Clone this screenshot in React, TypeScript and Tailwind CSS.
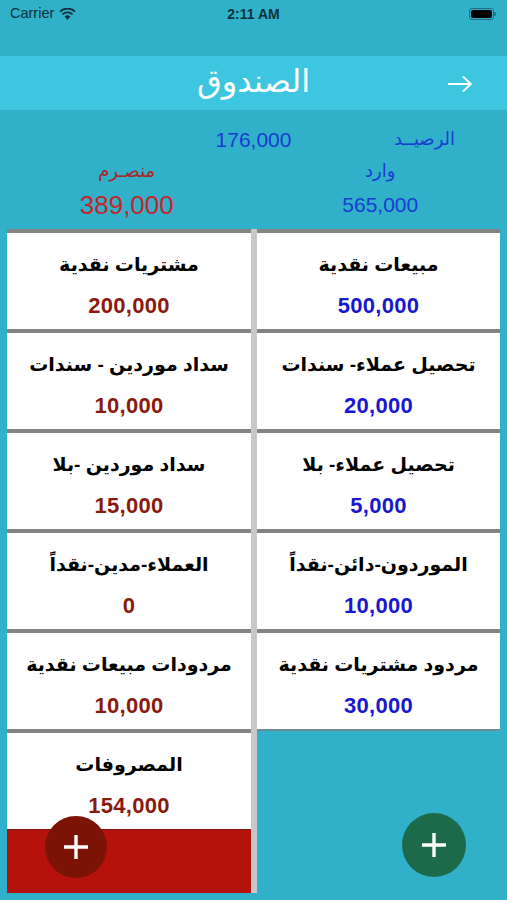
import React from "react";

const LEFT = [
  { title: "مشتريات نقدية", value: "200,000" },
  { title: "سداد موردين - سندات", value: "10,000" },
  { title: "سداد موردين -بلا", value: "15,000" },
  { title: "العملاء-مدين-نقداً", value: "0" },
  { title: "مردودات مبيعات نقدية", value: "10,000" },
  { title: "المصروفات", value: "154,000" },
];

const RIGHT = [
  { title: "مبيعات نقدية", value: "500,000" },
  { title: "تحصيل عملاء- سندات", value: "20,000" },
  { title: "تحصيل عملاء- بلا", value: "5,000" },
  { title: "الموردون-دائن-نقداً", value: "10,000" },
  { title: "مردود مشتريات نقدية", value: "30,000" },
];

function Card({ title, value, tone }: { title: string; value: string; tone: "red" | "blue" }) {
  return (
    <div className="h-[100px] bg-white border-t-[4px] border-[#838383] flex flex-col items-center pt-[19px]">
      <div dir="rtl" className="text-[19px] font-bold text-black leading-[26px]">
        {title}
      </div>
      <div
        className={
          "mt-[15px] text-[22px] font-bold leading-[26px] tracking-[0.3px] " +
          (tone === "red" ? "text-[#8a1a0e]" : "text-[#1818d0]")
        }
      >
        {value}
      </div>
    </div>
  );
}

function Plus() {
  return (
    <svg width="28" height="28" viewBox="0 0 28 28">
      <path d="M14 2v24M2 14h24" stroke="white" strokeWidth="3.4" />
    </svg>
  );
}

export default function App() {
  return (
    <div
      className="relative w-[507px] h-[900px] overflow-hidden bg-[#31b0c9]"
      style={{ fontFamily: '"Liberation Sans", "DejaVu Sans", sans-serif' }}
    >
      {/* status bar */}
      <div className="h-[28px] flex items-center justify-between px-[10px] text-[#10323a]">
        <div className="flex items-center gap-[5px] w-[120px]">
          <span className="text-[14.5px]">Carrier</span>
          <svg width="17" height="12" viewBox="0 0 17 12">
            <path d="M8.5 12 L5.6 8.6 A4.2 4.2 0 0 1 11.4 8.6 Z" fill="#10323a" />
            <path d="M3.4 6.4 A7.5 7.5 0 0 1 13.6 6.4" stroke="#10323a" strokeWidth="1.9" fill="none" />
            <path d="M1 3.6 A11 11 0 0 1 16 3.6" stroke="#10323a" strokeWidth="1.9" fill="none" />
          </svg>
        </div>
        <span className="text-[14px] font-bold">2:11 AM</span>
        <div className="w-[120px] flex justify-end pr-[1px]">
          <div className="flex items-center">
            <div className="w-[25px] h-[12px] rounded-[3px] border border-[#1f6d7d] p-[1px]">
              <div className="w-full h-full rounded-[2px] bg-black" />
            </div>
            <div className="w-[1.5px] h-[4px] bg-[#1f6d7d] rounded-r" />
          </div>
        </div>
      </div>
      <div className="h-[28px]" />

      {/* header */}
      <div className="relative h-[54px] bg-[#3ec6e0] flex items-center justify-center">
        <span dir="rtl" className="text-white text-[32px] leading-none pb-[4px]">
          الصندوق
        </span>
        <svg className="absolute right-[34px] top-[19px]" width="26" height="18" viewBox="0 0 26 18">
          <path d="M1 9h23M16 1.5 23.8 9 16 16.5" stroke="white" strokeWidth="1.8" fill="none" />
        </svg>
      </div>

      {/* summary */}
      <div className="h-[119px] pt-[14px]">
        <div className="grid grid-cols-3 items-center h-[28px]">
          <div />
          <div className="text-center text-[21px] text-[#1a3bd4]">176,000</div>
          <div dir="rtl" className="text-center text-[18px] text-[#1a3bd4] pl-[4px]">
            الرصيــد
          </div>
        </div>
        <div className="grid grid-cols-2 mt-[6px]">
          <div className="flex flex-col items-center">
            <span dir="rtl" className="text-[18px] text-[#a8262a] leading-[26px]">
              منصـرم
            </span>
            <span className="text-[26px] text-[#c4262a] leading-[34px] mt-[4px]">389,000</span>
          </div>
          <div className="flex flex-col items-center">
            <span dir="rtl" className="text-[18px] text-[#1a3bd4] leading-[26px]">
              وارد
            </span>
            <span className="text-[21px] text-[#1a3bd4] leading-[34px] mt-[4px]">565,000</span>
          </div>
        </div>
      </div>

      {/* panel */}
      <div className="mx-[7px] flex items-start">
        <div className="w-[250px] border-r-[6px] border-[#c8c8c8] flex flex-col">
          {LEFT.map((c) => (
            <Card key={c.title} title={c.title} value={c.value} tone="red" />
          ))}
          <div className="h-[64px] bg-[#b5120c] border-t border-[#7a1a14]" />
        </div>
        <div className="flex-1 flex flex-col border-b-[2px] border-[#6f8a90]">
          {RIGHT.map((c) => (
            <Card key={c.title} title={c.title} value={c.value} tone="blue" />
          ))}
        </div>
      </div>

      {/* floating buttons */}
      <button className="absolute left-[45px] top-[816px] w-[62px] h-[62px] rounded-full bg-[#7c1307] flex items-center justify-center">
        <Plus />
      </button>
      <button className="absolute left-[402px] top-[813px] w-[64px] h-[64px] rounded-full bg-[#1d6a4a] flex items-center justify-center">
        <Plus />
      </button>
    </div>
  );
}
